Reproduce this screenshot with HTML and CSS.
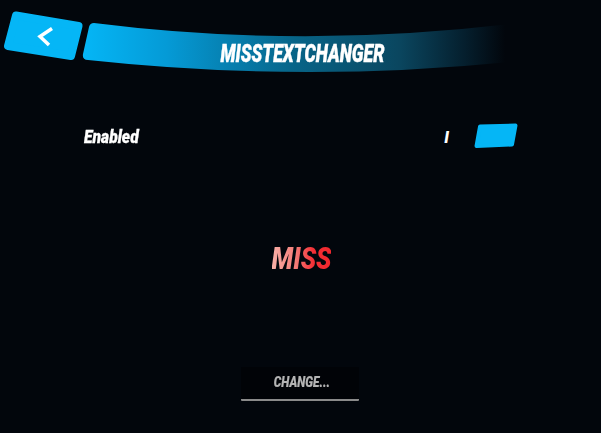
FILE: index.html
```html
<!DOCTYPE html>
<html lang="en">
<head>
<meta charset="utf-8">
<title>MissTextChanger</title>
<link rel="stylesheet" href="styles.css">
</head>
<body>
<div class="screen">
  <header class="header">
    <svg class="header-art" width="601" height="90" viewBox="0 0 601 90" aria-hidden="true">
      <defs>
        <linearGradient id="barFade" gradientUnits="userSpaceOnUse" x1="83" y1="0" x2="505" y2="0">
          <stop offset="0" stop-color="#05b6f6"/>
          <stop offset="0.2" stop-color="#059ad6"/>
          <stop offset="0.5" stop-color="#076488"/>
          <stop offset="0.75" stop-color="#0a465f"/>
          <stop offset="0.9" stop-color="#05202f"/>
          <stop offset="1" stop-color="#02060c"/>
        </linearGradient>
      </defs>
      <path class="back-shape" d="M16 15.500 L78.500 26 L71 56 L8 46 Z"/>
      <path class="back-arrow" d="M52 28.500 L40 36.500 L49 45"/>
      <path d="M94 23 Q300 49 510 24 L510 62 Q300 83 88 60 Q82 60 83 54 L89 27 Q90 23 94 23 Z" fill="url(#barFade)"/>
    </svg>
    <h1 class="title">MISSTEXTCHANGER</h1>
  </header>
  <main class="content">
    <div class="row">
      <span class="label">Enabled</span>
      <div class="toggle">
        <span class="toggle-mark">I</span>
        <svg class="toggle-knob" width="46" height="26" viewBox="0 0 46 26" aria-hidden="true">
          <path d="M7 3.500 L42.500 2.500 L39 21.500 L3.500 23 Z"/>
        </svg>
      </div>
    </div>
    <div class="preview"><span class="miss">MISS</span></div>
    <div class="actions">
      <button class="change" type="button"><span class="change-text">CHANGE...</span></button>
    </div>
  </main>
</div>
</body>
</html>
```
FILE: styles.css
```css
* { box-sizing: border-box; }
html, body { margin: 0; height: 100%; }
body {
  background: #02060c;
  overflow: hidden;
  font-family: Roboto, "Liberation Sans", sans-serif;
  font-weight: 900;
  font-style: italic;
  color: #fff;
}
.screen {
  width: 601px;
  height: 433px;
  display: flex;
  flex-direction: column;
}
.header {
  position: relative;
  height: 90px;
  flex: none;
  display: flex;
  justify-content: center;
  padding: 39px 0 0 3px;
}
.header-art {
  position: absolute;
  left: 0;
  top: 0;
}
.back-shape {
  fill: #05b6f6;
  stroke: #05b6f6;
  stroke-width: 8;
  stroke-linejoin: round;
}
.back-arrow {
  fill: none;
  stroke: #fff;
  stroke-width: 3.500;
}
.title {
  position: relative;
  margin: 0;
  font-size: 25px;
  line-height: 29px;
  font-weight: 900;
  white-space: nowrap;
  -webkit-text-stroke: 0.4px #fff;
  transform: scaleX(0.71);
}
.content {
  flex: 1;
  display: flex;
  flex-direction: column;
}
.row {
  display: flex;
  align-items: center;
  justify-content: space-between;
  height: 26px;
  margin-top: 33px;
  padding: 0 82px 0 84px;
}
.label {
  font-size: 18px;
  -webkit-text-stroke: 0.3px #fff;
  transform: scaleX(0.87);
  transform-origin: left center;
}
.toggle {
  display: flex;
  align-items: center;
  gap: 24px;
}
.toggle-mark {
  font-size: 16px;
  padding-top: 3px;
}
.toggle-knob path {
  fill: #05b6f6;
  stroke: #05b6f6;
  stroke-width: 4;
  stroke-linejoin: round;
}
.preview {
  display: flex;
  justify-content: center;
  margin-top: 92px;
  padding-left: 2px;
  height: 36px;
}
.miss {
  font-size: 31px;
  line-height: 36px;
  transform: scaleX(0.82);
  background: linear-gradient(90deg, #f8b0a8 0%, #f47c78 40%, #f52f35 70%, #f0282e 100%);
  -webkit-background-clip: text;
  background-clip: text;
  color: transparent;
}
.actions {
  display: flex;
  justify-content: center;
  margin-top: 90px;
  padding-right: 2px;
}
.change {
  width: 118px;
  height: 34px;
  background: #010307;
  border: 0;
  border-bottom: 2px solid #8a8a8a;
  border-radius: 1px;
  padding: 0 0 3px 4px;
  color: #b4b4b4;
  font: inherit;
  font-size: 15.500px;
}
.change-text {
  display: inline-block;
  -webkit-text-stroke: 0.2px #b4b4b4;
  transform: scaleX(0.76);
}
```
